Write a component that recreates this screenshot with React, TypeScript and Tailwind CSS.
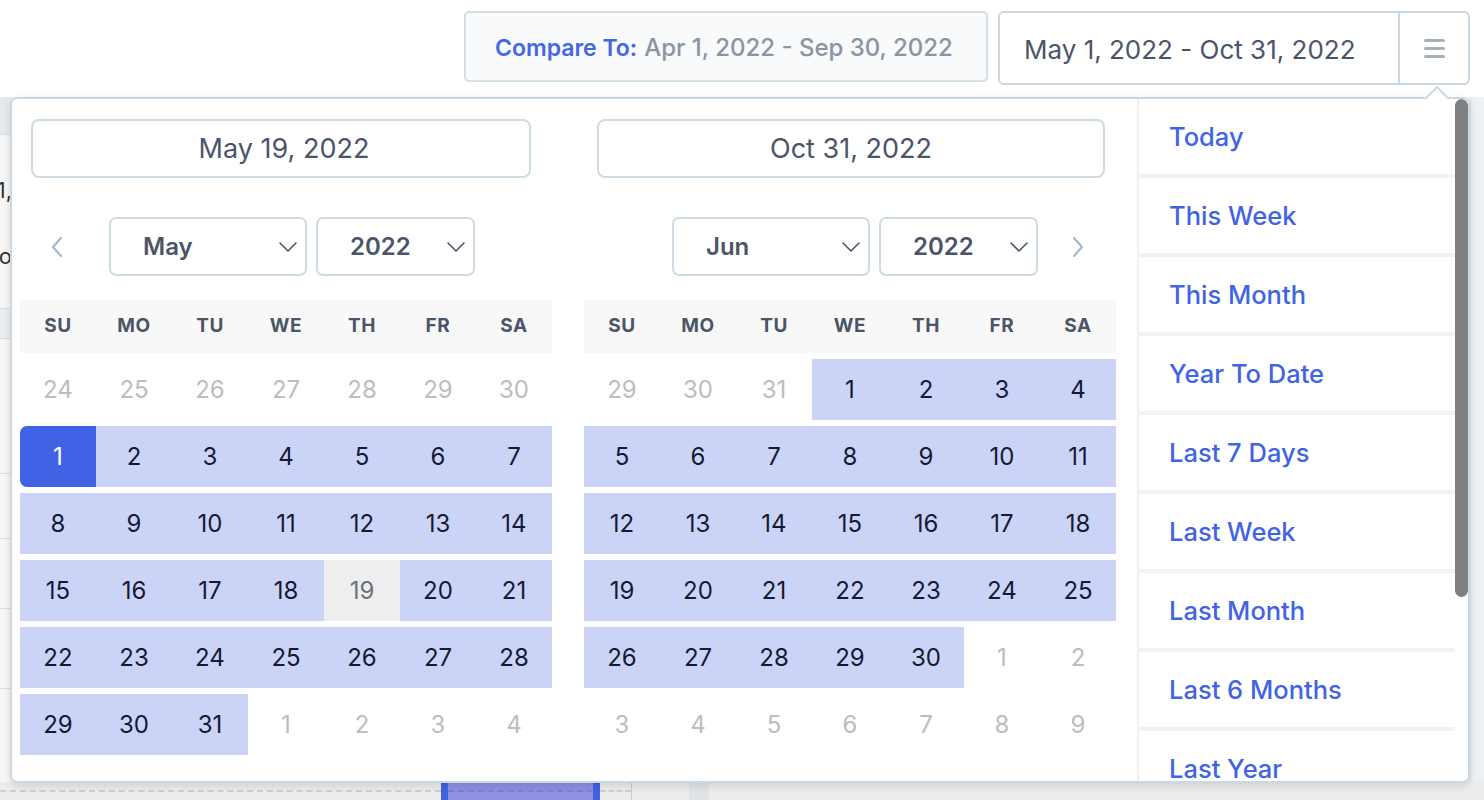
import React from 'react';

type Kind = 'out' | 'in' | 'start' | 'hover';
type Cell = [number, Kind];

const r = (from: number, to: number, k: Kind): Cell[] => {
  const a: Cell[] = [];
  for (let i = from; i <= to; i++) a.push([i, k]);
  return a;
};

const leftRows: Cell[][] = [
  r(24, 30, 'out'),
  [[1, 'start'], ...r(2, 7, 'in')],
  r(8, 14, 'in'),
  [...r(15, 18, 'in'), [19, 'hover'], ...r(20, 21, 'in')],
  r(22, 28, 'in'),
  [...r(29, 31, 'in'), ...r(1, 4, 'out')],
];

const rightRows: Cell[][] = [
  [...r(29, 31, 'out'), ...r(1, 4, 'in')],
  r(5, 11, 'in'),
  r(12, 18, 'in'),
  r(19, 25, 'in'),
  [...r(26, 30, 'in'), ...r(1, 2, 'out')],
  r(3, 9, 'out'),
];

const kindClass: Record<Kind, string> = {
  out: 'text-[#bdbdbd]',
  in: 'bg-[#cbd4f7] text-[#141a33]',
  start: 'bg-[#4063e5] text-white rounded-l-[7px]',
  hover: 'bg-[#eeeeee] text-[#6b7280]',
};

const days = ['SU', 'MO', 'TU', 'WE', 'TH', 'FR', 'SA'];

function Chevron() {
  return (
    <svg width="20" height="12" viewBox="0 0 20 12" fill="none">
      <path d="M2 2 L10 10 L18 2" stroke="#4a5568" strokeWidth="1.6" strokeLinecap="round" strokeLinejoin="round" />
    </svg>
  );
}

function Select({ label, w }: { label: string; w: string }) {
  return (
    <div className={`${w} h-[59px] border-2 border-[#cddbe5] rounded-[7px] flex items-center justify-between pl-[32px] pr-[7px] font-semibold text-[24px] text-[#4a5568]`}>
      <span>{label}</span>
      <Chevron />
    </div>
  );
}

function Arrow({ dir }: { dir: 'l' | 'r' }) {
  return (
    <svg width="14" height="22" viewBox="0 0 14 22" fill="none">
      {dir === 'l' ? (
        <path d="M11 2 L3 11 L11 20" stroke="#9fb6c9" strokeWidth="2" strokeLinecap="round" strokeLinejoin="round" />
      ) : (
        <path d="M3 2 L11 11 L3 20" stroke="#9fb6c9" strokeWidth="2" strokeLinecap="round" strokeLinejoin="round" />
      )}
    </svg>
  );
}

function Calendar({ date, side, month, rows }: { date: string; side: 'l' | 'r'; month: string; rows: Cell[][] }) {
  return (
    <div className="w-[532px] flex flex-col">
      <div className={`h-[59px] border-2 border-[#cddbe5] rounded-[8px] flex items-center justify-center pt-[2px] text-[27px] text-[#4a5568] ${side === 'l' ? 'ml-[11px] mr-[21px] pl-[6px]' : 'ml-[13px] mr-[11px]'}`}>
        {date}
      </div>
      <div className={`mt-[39px] h-[59px] flex items-center ${side === 'r' ? 'justify-end' : ''}`}>
        {side === 'l' && (
          <div className="w-[74px] flex items-center justify-center mr-[15px]">
            <Arrow dir="l" />
          </div>
        )}
        <Select label={month} w="w-[198px]" />
        <div className="w-[9px]" />
        <Select label="2022" w="w-[159px]" />
        {side === 'r' && (
          <div className="w-[76px] ml-[2px] flex items-center justify-center">
            <Arrow dir="r" />
          </div>
        )}
      </div>
      <div className="mt-[24px] h-[53px] grid grid-cols-7 bg-[#f8f8f8] text-[19px] font-bold text-[#4a5568] tracking-[0.03em]">
        {days.map((d) => (
          <div key={d} className="flex items-center justify-center">{d}</div>
        ))}
      </div>
      <div className="mt-[6px] flex flex-col gap-[6px]">
        {rows.map((row, i) => (
          <div key={i} className="grid grid-cols-7 h-[61px]">
            {row.map(([n, k], j) => (
              <div key={j} className={`flex items-center justify-center text-[24px] ${kindClass[k]}`}>{n}</div>
            ))}
          </div>
        ))}
      </div>
    </div>
  );
}

const presets = ['Today', 'This Week', 'This Month', 'Year To Date', 'Last 7 Days', 'Last Week', 'Last Month', 'Last 6 Months', 'Last Year'];

export default function App() {
  return (
    <div className="relative w-[1484px] h-[800px] overflow-hidden bg-white font-['Inter',sans-serif]">
      {/* top bar */}
      <div className="h-[97px] flex justify-end items-start pt-[11px] pr-[14px] gap-[10px]">
        <div className="w-[524px] h-[71px] bg-[#f9fafb] border-2 border-[#d3dfe7] rounded-[5px] flex items-center pl-[29px] pt-[3px] text-[23px] font-medium whitespace-nowrap">
          <span className="text-[#4466e8] font-semibold">Compare To:</span>
          <span className="text-[#8a94a3] text-[24px] ml-[7px]">Apr 1, 2022 - Sep 30, 2022</span>
        </div>
        <div className="w-[472px] h-[74px] bg-white border-2 border-[#c8d7e2] rounded-[6px] flex">
          <div className="flex-1 flex items-center pl-[24px] pt-[3px] text-[26px] text-[#4a5568] whitespace-nowrap border-r-2 border-[#c8d7e2]">
            May 1, 2022 - Oct 31, 2022
          </div>
          <div className="w-[68px] flex flex-col items-center justify-center gap-[5px]">
            <div className="w-[21px] h-[3px] rounded bg-[#a6b0ba]" />
            <div className="w-[21px] h-[3px] rounded bg-[#a6b0ba]" />
            <div className="w-[21px] h-[3px] rounded bg-[#a6b0ba]" />
          </div>
        </div>
      </div>

      {/* page content behind */}
      <div className="h-[703px] flex flex-col bg-[#f3f4f5]">
        <div className="flex-1 flex">
          <div className="w-[12px] flex flex-col bg-[#f7f7f7]">
            <div className="h-[38px] bg-[#e6eaee] border-b border-[#d8dde2]" />
            <div className="h-[72px] flex justify-end items-end overflow-hidden whitespace-nowrap text-[22px] text-[#333]">Jul 1,</div>
            <div className="h-[98px] flex justify-end items-center overflow-hidden whitespace-nowrap text-[22px] text-[#333]">Info</div>
            <div className="h-[4px] border-b border-[#dcdcdc]" />
            <div className="h-[30px] bg-[#eceef0] border-b border-[#dcdcdc]" />
            <div className="h-[135px] border-b border-[#dcdcdc]" />
            <div className="h-[65px] border-b border-[#dcdcdc]" />
            <div className="h-[70px] border-b border-[#dcdcdc]" />
            <div className="h-[80px] border-b border-[#dcdcdc]" />
            <div className="flex-1" />
          </div>
          <div className="flex-1" />
          <div className="w-[14px] bg-[#eef1f4] border-l border-[#dde3e8]" />
        </div>
        <div className="h-[18px] flex bg-[#ececec]">
          <div className="w-[441px] flex items-center"><div className="w-full border-t-2 border-dashed border-[#cfcfcf]" /></div>
          <div className="w-[159px] bg-[#8e90e0] border-x-[7px] border-[#4262e1] flex items-center"><div className="w-full border-t-2 border-dashed border-[#7d80cf]" /></div>
          <div className="w-[32px] flex items-center border-r border-[#cfcfcf]"><div className="w-full border-t-2 border-dashed border-[#cfcfcf]" /></div>
          <div className="w-[57px]" />
          <div className="w-[20px] bg-[#dfe4e9]" />
          <div className="flex-1" />
        </div>
      </div>

      {/* popover */}
      <div className="absolute left-[10px] top-[97px] w-[1460px] h-[686px] bg-white border-2 border-[#c9d8e2] rounded-[7px] shadow-[0_3px_8px_rgba(0,0,0,0.12)] flex">
        <div className="absolute left-[1417px] top-[-10px] w-[16px] h-[16px] bg-white border-l-2 border-t-2 border-[#c9d8e2] rotate-45" />
        <div className="w-[1125px] flex gap-[32px] pl-[8px] pt-[20px]">
          <Calendar date="May 19, 2022" side="l" month="May" rows={leftRows} />
          <Calendar date="Oct 31, 2022" side="r" month="Jun" rows={rightRows} />
        </div>
        <div className="relative flex-1 border-l-2 border-[#f0f0f0] overflow-hidden rounded-r-[6px]">
          <div className="w-[316px] flex flex-col bg-[#f2f2f2] gap-[4px]">
            {presets.map((p) => (
              <div key={p} className="h-[75px] shrink-0 bg-white flex items-center pl-[30px] pt-[2px] text-[25.5px] font-medium text-[#4164e3]">
                {p}
              </div>
            ))}
          </div>
          <div className="absolute right-[0px] top-0 w-[13px] h-[498px] rounded-full bg-[#808080]" />
        </div>
      </div>
    </div>
  );
}
